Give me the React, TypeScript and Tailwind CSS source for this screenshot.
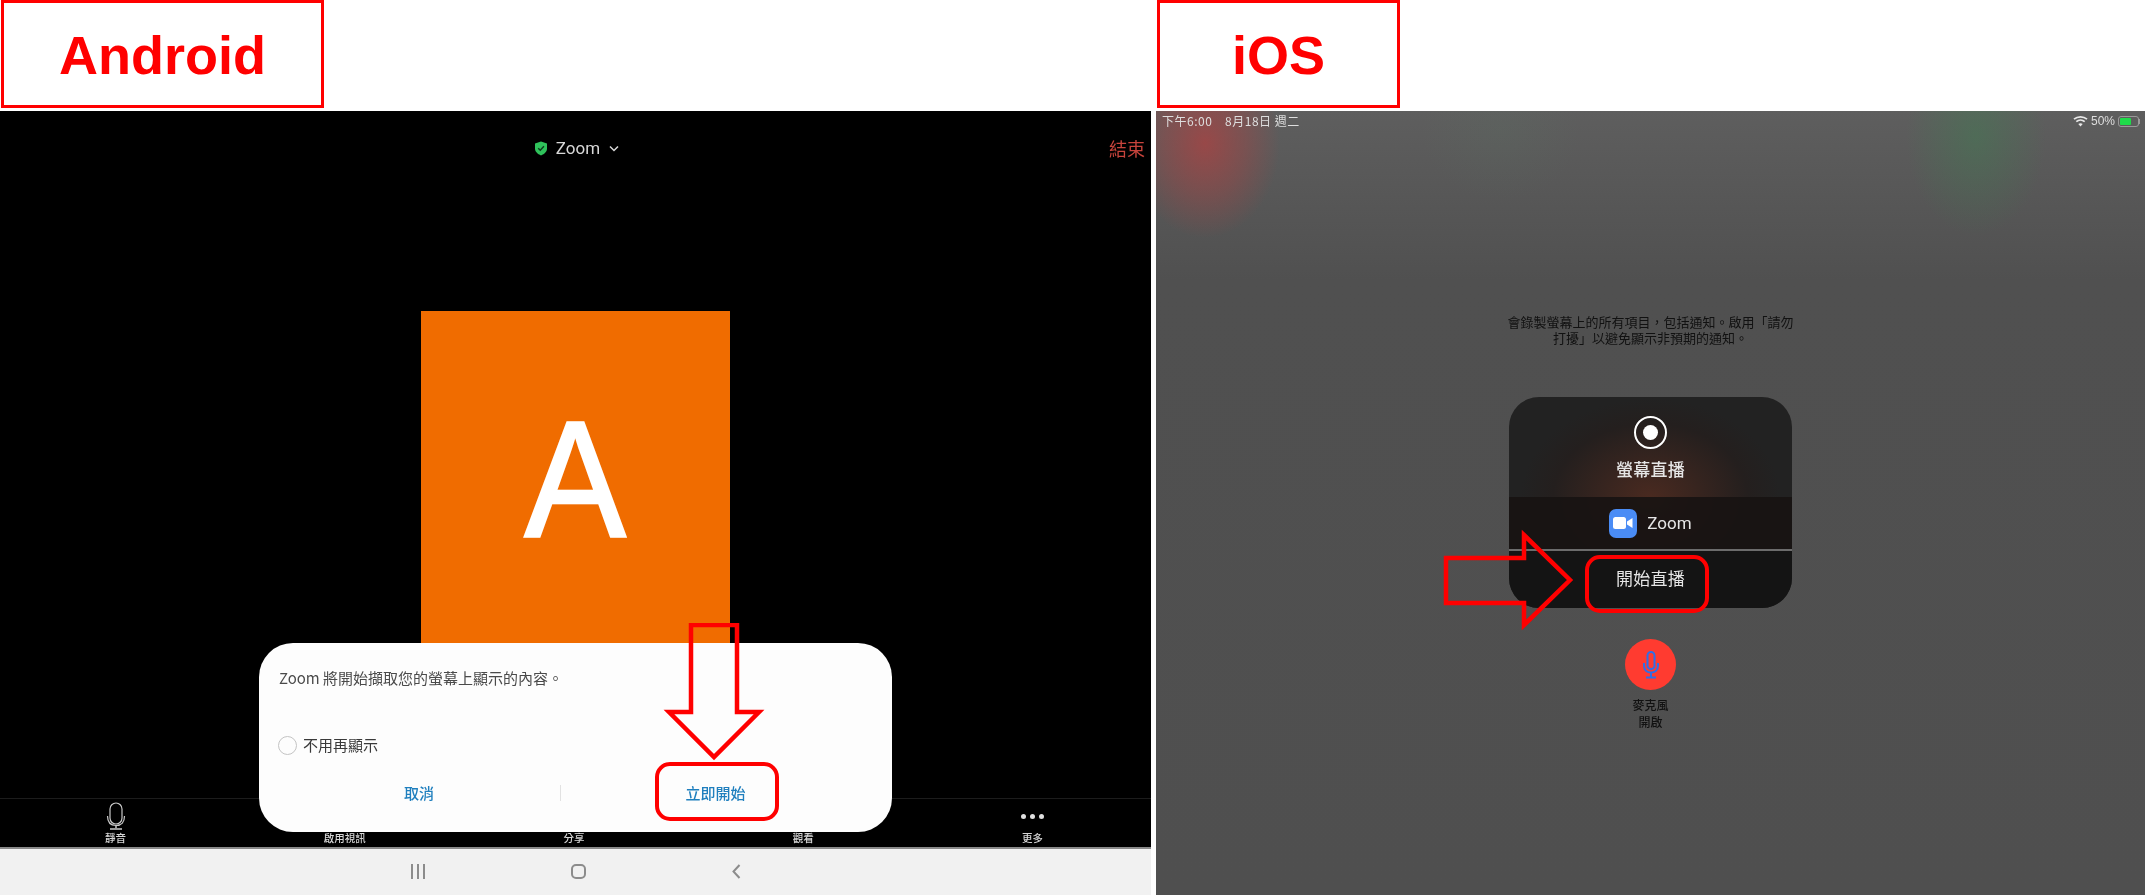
import type { ReactNode } from "react";

const TOOLBAR = ["啟用視訊", "分享", "觀看"];

function MicOutline() {
  return (
    <svg width="24" height="28" viewBox="0 0 24 28" fill="none" stroke="#c9c9c9" strokeWidth="1.2">
      <rect x="6" y="1" width="12" height="21" rx="6" />
      <path d="M3.5 14c0 6 3 9.5 8.500 9.500s8.500-3.500 8.500-9.500" />
      <path d="M12 23.500v2.500M6 27h12" strokeWidth="1.500" />
    </svg>
  );
}

function ToolbarItem({ label, children }: { label: string; children?: ReactNode }) {
  return (
    <div className="flex h-full flex-col items-center justify-end pb-[1px]">
      {children}
      <span className="text-[10.5px] leading-[16px] font-medium text-[#d6d6d6] blur-[0.4px]">{label}</span>
    </div>
  );
}

function AndroidPanel() {
  return (
    <div className="relative flex h-[784px] flex-col">
      <div className="flex h-[736px] flex-col bg-black">
        <div className="grid h-[74px] grid-cols-[1fr_auto_1fr] items-center">
          <span />
          <div className="flex items-center pl-[3px] text-[#d8d8d8]">
            <svg width="12" height="15" viewBox="0 0 13 15">
              <path d="M6.500 0 13 2.200v5.300c0 3.400-2.700 6-6.500 7.500C2.700 13.500 0 10.900 0 7.500V2.200z" fill="#2fc25b" />
              <path d="M3.500 7.200 5.700 9.400 9.700 5" fill="none" stroke="#0c3b1c" strokeWidth="1.500" />
            </svg>
            <span className="ml-[9px] text-[17px] leading-none font-['Roboto',sans-serif] blur-[0.3px]">Zoom</span>
            <svg className="ml-[9px]" width="10" height="7" viewBox="0 0 10 7" fill="none" stroke="#d8d8d8" strokeWidth="1.500">
              <path d="M1 1.500 5 5.500 9 1.500" />
            </svg>
          </div>
          <span className="justify-self-end pr-[6px] text-[18px] leading-none text-[#c8443c] blur-[0.3px]">結束</span>
        </div>
        <div className="h-[613px] overflow-hidden">
          <div className="mx-auto mt-[126px] flex h-[334px] w-[309px] items-start justify-center bg-[#f06c00]">
            <span className="mt-[73px] text-[165px] leading-[190px] text-white font-['Liberation_Sans',sans-serif] [-webkit-text-stroke:2.5px_#ffffff] scale-x-[0.92]">
              A
            </span>
          </div>
        </div>
        <div className="grid h-[49px] grid-cols-5 border-t border-[#1c1c1c] pr-[4px] pl-[1px]">
          <ToolbarItem label="靜音">
            <MicOutline />
          </ToolbarItem>
          {TOOLBAR.map((label) => (
            <ToolbarItem key={label} label={label} />
          ))}
          <ToolbarItem label="更多">
            <div className="mb-[11px] flex gap-[4px]">
              <span className="size-[5px] rounded-full bg-[#e0e0e0]" />
              <span className="size-[5px] rounded-full bg-[#e0e0e0]" />
              <span className="size-[5px] rounded-full bg-[#e0e0e0]" />
            </div>
          </ToolbarItem>
        </div>
      </div>
      <div className="flex h-[48px] items-center justify-center gap-[146px] border-t-2 border-[#8a8a8a] bg-[#f1f1f1] pb-[2px] pl-[1px]">
        <div className="flex gap-[4px]">
          <span className="h-[15px] w-[2px] bg-[#8c8c8c]" />
          <span className="h-[15px] w-[2px] bg-[#8c8c8c]" />
          <span className="h-[15px] w-[2px] bg-[#8c8c8c]" />
        </div>
        <span className="h-[15px] w-[15px] rounded-[5px] border-2 border-[#8c8c8c]" />
        <svg width="9" height="15" viewBox="0 0 9 15" fill="none" stroke="#8c8c8c" strokeWidth="2">
          <path d="M7.500 1 1.500 7.500 7.500 14" />
        </svg>
      </div>

      <div className="absolute top-[532px] left-[259px] flex h-[189px] w-[633px] flex-col rounded-[34px] bg-[#fdfdfd] pt-[24px] pr-[20px] pl-[20px]">
        <p className="text-[15px] leading-[22px] whitespace-nowrap text-[#4a4a4a] blur-[0.3px]">Zoom 將開始擷取您的螢幕上顯示的內容。</p>
        <div className="mt-[46px] -ml-[1px] flex items-center">
          <span className="size-[19px] rounded-full border border-[#c4c4c4]" />
          <span className="ml-[6px] text-[15px] leading-[20px] text-[#3a3a3a] blur-[0.3px]">不用再顯示</span>
        </div>
        <div className="mt-[28px] -ml-[1px] flex items-center text-[15px] leading-[20px] font-medium text-[#1f7fbe]">
          <span className="w-[282px] text-center blur-[0.3px]">取消</span>
          <span className="h-[16px] w-px bg-[#e2e2e2]" />
          <span className="w-[309px] text-center blur-[0.3px]">立即開始</span>
        </div>
      </div>

      <svg className="absolute top-[512px] left-[660px]" width="108" height="140" viewBox="0 0 108 140" fill="none" stroke="#ff0000" strokeWidth="4.500">
        <path d="M31 2H77V89H99L54 134 9 89H31Z" />
      </svg>
      <div className="absolute top-[651px] left-[655px] h-[59px] w-[124px] rounded-[15px] border-[4px] border-[#ff0000]" />
    </div>
  );
}

function IosPanel() {
  return (
    <div className="relative flex h-[784px] flex-col bg-[radial-gradient(ellipse_75px_95px_at_49px_32px,rgba(175,65,65,0.72),rgba(175,65,65,0.35)_55%,transparent),radial-gradient(ellipse_70px_100px_at_820px_25px,rgba(60,130,80,0.4),rgba(60,130,80,0.18)_55%,transparent),radial-gradient(ellipse_80px_70px_at_345px_20px,rgba(90,120,100,0.14),transparent),linear-gradient(#5e5e5e,#505050_170px,#4f4f4f)] text-center">
      <div className="flex h-[20px] items-center justify-between pr-[5px] pl-[6px] text-[12px] leading-none text-[#dedede] blur-[0.3px]">
        <span className="tracking-[0.5px] whitespace-pre">下午6:00    8月18日 週二</span>
        <div className="flex items-center">
          <svg width="15" height="12" viewBox="0 0 15 12" fill="none" stroke="#e8e8e8" strokeWidth="1.700">
            <path d="M1 4.200c3.700-3.200 9.300-3.200 13 0M3.300 6.700c2.400-2 6-2 8.400 0" />
            <path d="M7.500 11.500 5.300 9c1.300-.9 3.100-.9 4.400 0z" fill="#e8e8e8" stroke="none" />
          </svg>
          <span className="ml-[3px] font-['Liberation_Sans',sans-serif]">50%</span>
          <div className="ml-[3px] flex h-[11px] w-[21px] items-center rounded-[3px] border border-[#9a9a9a] p-[1px]">
            <span className="h-full w-[11px] rounded-[1px] bg-[#1fdc4a]" />
          </div>
          <span className="h-[5px] w-[1px] bg-[#9a9a9a]" />
        </div>
      </div>

      <p className="mx-auto mt-[183px] w-[290px] text-[13px] leading-[16px] text-[#111] blur-[0.3px]">
        會錄製螢幕上的所有項目，包括通知。啟用「請勿打擾」以避免顯示非預期的通知。
      </p>

      <div className="relative mx-auto mt-[51px] h-[211px] w-[283px] overflow-hidden rounded-[30px] bg-[radial-gradient(ellipse_130px_100px_at_50%_48%,#4a2a20,#241f1e_75%,#222222)] text-[#e6e6e6]">
        <div className="flex h-[100px] flex-col items-center pt-[19px]">
          <span className="flex size-[33px] items-center justify-center rounded-full border-2 border-white">
            <span className="size-[15px] rounded-full bg-white" />
          </span>
          <span className="mt-[8px] text-[17px] leading-[24px] font-medium tracking-[0.3px] blur-[0.3px]">螢幕直播</span>
        </div>
        <div className="flex h-[52px] items-center justify-center gap-[10px] bg-[#171312]/90">
          <span className="flex h-[29px] w-[28px] items-center justify-center rounded-[7px] bg-[#4a8cf5]">
            <svg width="20" height="12" viewBox="0 0 20 12">
              <rect width="13" height="12" rx="2.500" fill="#ffffff" />
              <path d="M14 4.500 19.500 1v10L14 7.500z" fill="#ffffff" />
            </svg>
          </span>
          <span className="text-[17px] leading-none font-['Roboto',sans-serif] blur-[0.3px]">Zoom</span>
        </div>
        <div className="h-[2px] bg-[#6c6c6c]" />
        <div className="flex h-[57px] items-center justify-center bg-[#141414] pb-[4px] text-[17px] tracking-[0.3px] blur-[0.3px]">開始直播</div>
      </div>

      <div className="mx-auto mt-[31px] flex size-[51px] items-center justify-center rounded-full bg-[#ff3b30]">
        <svg width="18" height="28" viewBox="0 0 18 28" fill="none" stroke="#2f6fe6" strokeWidth="2">
          <rect x="5.500" y="1" width="7" height="17" rx="3.500" />
          <path d="M2 12v2.500c0 4.500 3 7 7 7s7-2.500 7-7V12M9 21.500V26M4 26.500h10" />
        </svg>
      </div>
      <p className="mt-[6px] text-[12px] leading-[17px] font-medium text-[#111] blur-[0.3px]">
        麥克風
        <br />
        開啟
      </p>

      <svg className="absolute top-[418px] left-[286px]" width="132" height="102" viewBox="0 0 132 102" fill="none" stroke="#ff0000" strokeWidth="4.500">
        <path d="M4 29H82V6L128 51 82 96V74H4Z" />
      </svg>
      <div className="absolute top-[444px] left-[429px] h-[58px] w-[124px] rounded-[15px] border-[4px] border-[#ff0000]" />
    </div>
  );
}

function TitleBox({ label, className }: { label: string; className: string }) {
  return (
    <div className={`flex h-[108px] items-center justify-center border-[3px] border-[#ff0000] pt-[1px] font-['Liberation_Sans',sans-serif] text-[54px] leading-none font-bold text-[#ff0000] ${className}`}>
      {label}
    </div>
  );
}

export default function App() {
  return (
    <div className="flex h-[895px] w-[2145px] overflow-hidden bg-white font-['Noto_Sans_CJK_TC',sans-serif]">
      <div className="w-[1151px]">
        <div className="h-[111px] pl-[1px]">
          <TitleBox label="Android" className="w-[323px]" />
        </div>
        <AndroidPanel />
      </div>
      <div className="ml-[5px] w-[989px]">
        <div className="h-[111px] pl-[1px]">
          <TitleBox label="iOS" className="w-[243px]" />
        </div>
        <IosPanel />
      </div>
    </div>
  );
}
